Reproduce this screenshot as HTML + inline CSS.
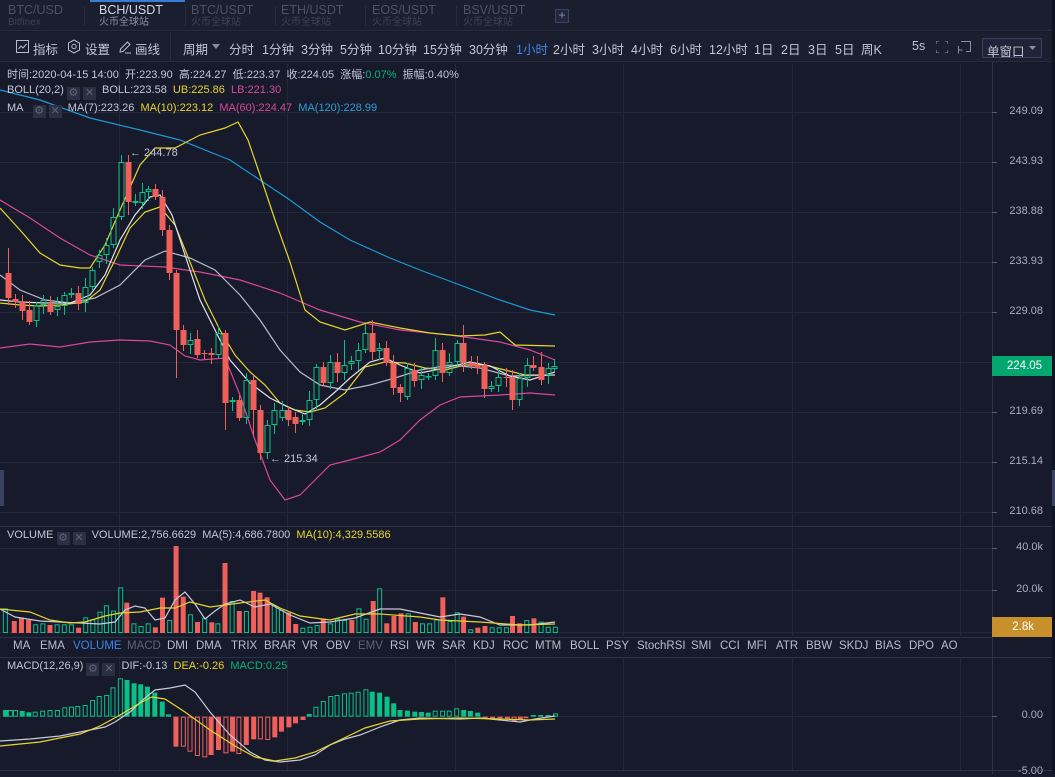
<!DOCTYPE html>
<html><head><meta charset="utf-8">
<style>
*{margin:0;padding:0;box-sizing:border-box}
body{width:1055px;height:774px;overflow:hidden;background:#161a2a;font-family:"Liberation Sans","Noto Sans CJK SC",sans-serif;color:#c3c6d4;position:relative}
.abs{position:absolute;white-space:nowrap}
.tabs{position:absolute;left:0;top:0;width:1052px;height:31px;background:#1a1e2f;border-bottom:1px solid #262b3e}
.tab{position:absolute;top:4px;font-size:12.5px;line-height:13px;color:#4b5168}
.tab small{display:block;font-size:10px;line-height:11px;color:#3d4259}
.tb{position:absolute;top:32px;left:0;width:1052px;height:30px;background:#1a1e2f;border-bottom:1px solid #262b3e;font-size:12.5px}
.tb span{position:absolute;top:7px}
.info{font-size:11px}
.ind span{position:absolute;top:640px;font-size:11.5px;color:#b9bccb}
.ax{position:absolute;left:1003px;font-size:11px;color:#a9adbf;width:40px;text-align:right}
.ibtn{display:inline-block;width:13px;height:13px;background:#2a3042;vertical-align:-3px;margin-right:3px;color:#5d6378;font-size:11px;line-height:13px;text-align:center}
</style></head><body>
<svg id="g" class="abs" style="left:0;top:0" width="1055" height="774"></svg>

<div class="tabs">
 <div style="position:absolute;left:90px;top:0;width:95px;height:2px;background:#3a7bd5"></div>
 <div class="tab" style="left:8px">BTC/USD<small>Bitfinex</small></div>
 <div class="tab" style="left:99px;color:#d4d7e2">BCH/USDT<small style="color:#8a8fa3">火币全球站</small></div>
 <div class="tab" style="left:191px">BTC/USDT<small>火币全球站</small></div>
 <div class="tab" style="left:281px">ETH/USDT<small>火币全球站</small></div>
 <div class="tab" style="left:372px">EOS/USDT<small>火币全球站</small></div>
 <div class="tab" style="left:463px">BSV/USDT<small>火币全球站</small></div>
 <div style="position:absolute;left:84px;top:6px;width:1px;height:20px;background:#262b3e"></div>
 <div style="position:absolute;left:185px;top:6px;width:1px;height:20px;background:#262b3e"></div>
 <div style="position:absolute;left:275px;top:6px;width:1px;height:20px;background:#262b3e"></div>
 <div style="position:absolute;left:365px;top:6px;width:1px;height:20px;background:#262b3e"></div>
 <div style="position:absolute;left:456px;top:6px;width:1px;height:20px;background:#262b3e"></div>
 <div style="position:absolute;left:555px;top:9px;width:14px;height:14px;border:1px solid #3b4260;background:#22283c;color:#8a90aa;font-size:12px;line-height:11px;text-align:center">+</div>
</div>

<div class="tb">
 <svg class="abs" style="left:16px;top:8px" width="13" height="13"><rect x="0.5" y="0.5" width="12" height="12" fill="none" stroke="#b9bccb"/><path d="M2.5 9 L5 6 L7 8 L10.5 4" fill="none" stroke="#b9bccb"/></svg>
 <span style="left:33px">指标</span>
 <svg class="abs" style="left:67px;top:7px" width="14" height="15"><path d="M7 1 L12.5 4 L12.5 11 L7 14 L1.5 11 L1.5 4 Z" fill="none" stroke="#b9bccb"/><circle cx="7" cy="7.5" r="2.2" fill="none" stroke="#b9bccb"/></svg>
 <span style="left:85px">设置</span>
 <svg class="abs" style="left:118px;top:8px" width="14" height="14"><path d="M2 12 L2.5 9 L9.5 2 L12 4.5 L5 11.5 Z M7 13 H13" fill="none" stroke="#b9bccb"/></svg>
 <span style="left:135px">画线</span>
 <div style="position:absolute;left:170px;top:0;width:1px;height:30px;background:#262b3e"></div>
 <span style="left:183px">周期</span>
 <svg class="abs" style="left:212px;top:12px" width="9" height="6"><path d="M0 0 H8 L4 5 Z" fill="#8a8fa3"/></svg>
 <span style="left:229px">分时</span><span style="left:262px">1分钟</span><span style="left:301px">3分钟</span><span style="left:340px">5分钟</span><span style="left:378px">10分钟</span><span style="left:423px">15分钟</span><span style="left:469px">30分钟</span><span style="left:516px;color:#3f86e6">1小时</span><span style="left:553px">2小时</span><span style="left:592px">3小时</span><span style="left:631px">4小时</span><span style="left:670px">6小时</span><span style="left:709px">12小时</span><span style="left:754px">1日</span><span style="left:781px">2日</span><span style="left:808px">3日</span><span style="left:835px">5日</span><span style="left:861px">周K</span>
 <span style="left:912px">5s</span>
 <svg class="abs" style="left:936px;top:9px" width="12" height="12"><path d="M0 3V0H3M9 0H12V3M12 9V12H9M3 12H0V9" fill="none" stroke="#8a8fa3"/></svg>
 <svg class="abs" style="left:958px;top:9px" width="13" height="13"><path d="M3 0.5H12.5V10.5H8M0.5 5V12.5M0.5 9H4.5" fill="none" stroke="#8a8fa3"/></svg>
 <div style="position:absolute;left:982px;top:6px;width:60px;height:20px;border:1px solid #3a4160;background:#1f2438"></div>
 <span style="left:987px;top:9px">单窗口</span>
 <svg class="abs" style="left:1029px;top:14px" width="8" height="5"><path d="M0 0H7L3.5 4Z" fill="#8a8fa3"/></svg>
</div>

<div class="abs info" style="left:7px;top:66px">时间:2020-04-15 14:00&nbsp; 开:223.90&nbsp; 高:224.27&nbsp; 低:223.37&nbsp; 收:224.05&nbsp; 涨幅:<span style="color:#08b27b">0.07%</span>&nbsp; 振幅:0.40%</div>
<div class="abs info" style="left:7px;top:84px">BOLL(20,2)&nbsp;<span class="ibtn">⚙</span><span class="ibtn">✕</span> BOLL:223.58&nbsp; <span style="color:#e8d52c">UB:225.86</span>&nbsp; <span style="color:#d9479a">LB:221.30</span></div>
<div class="abs info" style="left:7px;top:102px">MA&nbsp;&nbsp; <span class="ibtn">⚙</span><span class="ibtn">✕</span> MA(7):223.26&nbsp; <span style="color:#e8d52c">MA(10):223.12</span>&nbsp; <span style="color:#d9479a">MA(60):224.47</span>&nbsp; <span style="color:#2f9fd6">MA(120):228.99</span></div>
<div class="abs info" style="left:7px;top:529px">VOLUME&nbsp;<span class="ibtn">⚙</span><span class="ibtn">✕</span> VOLUME:2,756.6629&nbsp; MA(5):4,686.7800&nbsp; <span style="color:#e8d52c">MA(10):4,329.5586</span></div>
<div class="abs info" style="left:7px;top:660px">MACD(12,26,9)&nbsp;<span class="ibtn">⚙</span><span class="ibtn">✕</span> DIF:-0.13&nbsp; <span style="color:#e8d52c">DEA:-0.26</span>&nbsp; <span style="color:#08b27b">MACD:0.25</span></div>

<div class="ind">
<span style="left:13px">MA</span><span style="left:40px">EMA</span><span style="left:73px;color:#3f86e6">VOLUME</span><span style="left:127px;color:#5d6378">MACD</span><span style="left:167px">DMI</span><span style="left:196px">DMA</span><span style="left:231px">TRIX</span><span style="left:264px">BRAR</span><span style="left:302px">VR</span><span style="left:326px">OBV</span><span style="left:358px;color:#5d6378">EMV</span><span style="left:390px">RSI</span><span style="left:416px">WR</span><span style="left:442px">SAR</span><span style="left:473px">KDJ</span><span style="left:503px">ROC</span><span style="left:535px">MTM</span><span style="left:570px">BOLL</span><span style="left:606px">PSY</span><span style="left:637px">StochRSI</span><span style="left:691px">SMI</span><span style="left:720px">CCI</span><span style="left:747px">MFI</span><span style="left:776px">ATR</span><span style="left:806px">BBW</span><span style="left:839px">SKDJ</span><span style="left:875px">BIAS</span><span style="left:909px">DPO</span><span style="left:941px">AO</span>
</div>

<div class="ax" style="top:105px">249.09</div>
<div class="ax" style="top:155px">243.93</div>
<div class="ax" style="top:205px">238.88</div>
<div class="ax" style="top:255px">233.93</div>
<div class="ax" style="top:305px">229.08</div>
<div class="ax" style="top:405px">219.69</div>
<div class="ax" style="top:455px">215.14</div>
<div class="ax" style="top:505px">210.68</div>
<div class="ax" style="top:541px">40.0k</div>
<div class="ax" style="top:583px">20.0k</div>
<div class="ax" style="top:709px">0.00</div>
<div class="ax" style="top:765px">-5.00</div>
<div class="abs" style="left:992px;top:356px;width:60px;height:20px;background:#03a66d;color:#fff;font-size:11.5px;line-height:20px;text-align:right;padding-right:10px">224.05</div>
<div class="abs" style="left:992px;top:617px;width:60px;height:20px;background:#c8902b;color:#fff;font-size:11.5px;line-height:20px;text-align:right;padding-right:18px">2.8k</div>
<div class="abs" style="left:130px;top:147px;font-size:11px;color:#c3c6d4">← 244.78</div>
<div class="abs" style="left:270px;top:453px;font-size:11px;color:#c3c6d4">← 215.34</div>

<script>
var S='';
function L(x1,y1,x2,y2,c,w){S+='<line x1="'+x1+'" y1="'+y1+'" x2="'+x2+'" y2="'+y2+'" stroke="'+c+'" stroke-width="'+(w||1)+'"/>';}
function R(x,y,w,h,c,hollow){if(h<1)h=1;if(hollow)S+='<rect x="'+(x+0.5)+'" y="'+(y+0.5)+'" width="'+(w-1)+'" height="'+Math.max(h-1,0.5)+'" fill="none" stroke="'+c+'"/>';else S+='<rect x="'+x+'" y="'+y+'" width="'+w+'" height="'+h+'" fill="'+c+'"/>';}
function P(pts,c){S+='<polyline points="'+pts.map(p=>p.join(',')).join(' ')+'" fill="none" stroke="'+c+'" stroke-width="1.2"/>';}
var G='#0bc087',RD='#f0605a',GR='#232839';
S+='<rect x="1052" y="0" width="3" height="774" fill="#0f1220"/>';
[112,162,212,262,312,362,412,462,512,548,590,632,716].forEach(y=>L(0,y+0.5,992,y+0.5,GR));
[119,287,455,623,792,960].forEach(x=>{L(x+0.5,64,x+0.5,526,GR);L(x+0.5,527,x+0.5,636,GR);L(x+0.5,658,x+0.5,770,GR);});
L(992.5,62,992.5,774,'#2b3148');
L(0,526.5,1052,526.5,'#2b3148');L(0,637.5,992,637.5,'#2b3148');L(0,657.5,1052,657.5,'#2b3148');L(0,770.5,1052,770.5,'#2b3148');
[112,162,212,262,312,412,462,512,548,590,716].forEach(y=>L(992,y+0.5,997,y+0.5,'#555b72'));
S+='<rect x="0" y="470" width="4" height="36" fill="#3a4160"/><rect x="1052" y="470" width="3" height="36" fill="#3a4160"/>';
P([[0,90],[40,100],[90,118],[140,130],[180,140],[230,160],[260,180],[290,200],[320,222],[350,240],[390,258],[420,270],[460,285],[500,300],[530,310],[555,315]],'#1b9ad6');
P([[0,200],[30,218],[60,238],[90,255],[120,265],[165,267],[200,272],[240,280],[280,293],[320,310],[360,322],[400,330],[450,335],[500,342],[530,350],[555,360]],'#d9479a');
P([[0,348],[30,344],[60,347],[90,342],[120,340],[150,341],[170,345],[185,356],[200,360],[225,358],[240,395],[255,440],[270,480],[285,500],[300,495],[315,480],[330,465],[350,460],[380,452],[400,440],[420,420],[440,405],[460,397],[500,395],[530,393],[555,395]],'#d9479a');
P([[0,208],[20,230],[40,253],[60,265],[80,268],[90,268],[105,245],[120,210],[140,165],[155,148],[175,148],[200,135],[225,128],[238,122],[248,140],[260,175],[275,220],[290,262],[305,310],[320,322],[345,330],[370,322],[400,328],[430,333],[460,336],[485,335],[500,332],[515,345],[555,346]],'#e8d52c');
P([[0,303],[20,305],[40,306],[60,305],[85,302],[100,290],[115,260],[130,228],[145,212],[160,207],[175,225],[190,262],[205,300],[220,330],[235,355],[250,372],[265,385],[280,403],[295,410],[310,412],[325,408],[345,393],[365,367],[385,362],[405,363],[425,368],[445,370],[465,365],[485,365],[505,370],[525,375],[555,375]],'#e8d52c');
P([[0,275],[20,290],[45,300],[70,303],[95,298],[120,285],[145,260],[165,251],[190,258],[215,270],[240,295],[260,320],[280,350],[300,372],[320,385],[345,390],[370,385],[395,378],[420,370],[450,365],[480,368],[510,376],[555,375]],'#b8bccd');
P([[0,300],[20,302],[45,303],[70,303],[90,295],[105,275],[120,240],[135,215],[150,197],[160,195],[172,215],[185,255],[200,300],[215,330],[230,360],[250,383],[270,398],[290,408],[305,414],[320,405],[335,392],[350,378],[370,362],[385,358],[400,365],[420,373],[445,368],[470,362],[490,366],[510,376],[530,380],[555,372]],'#e0e2ea');
var C=[[8,273,298],[15,299,302],[22,302,311],[29,310,322],[36,321,305],[43,305,300],[50,303,312],[57,310,306],[64,306,295],[71,295,293],[78,293,304],[85,303,287],[92,287,270],[99,262,255],[106,255,245],[113,245,217],[121,217,162],[128,162,202],[135,203,201],[142,203,192],[148,192,189],[155,189,197],[162,197,230],[169,230,273],[176,273,330],[183,330,345],[190,345,340],[197,339,355],[204,353,354],[211,353,355],[218,355,333],[225,333,403],[232,402,400],[239,400,418],[246,418,380],[253,380,410],[260,410,453],[267,453,425],[274,425,410],[282,418,410],[288,410,420],[295,417,424],[302,422,420],[309,420,400],[316,400,367],[323,367,383],[330,383,362],[337,362,373],[344,373,365],[351,364,361],[358,361,350],[365,350,333],[372,333,352],[379,351,348],[386,348,363],[393,363,388],[400,387,393],[407,397,368],[414,370,381],[421,380,375],[428,377,376],[435,376,350],[442,350,373],[449,373,362],[457,362,343],[463,343,363],[471,363,366],[477,365,368],[484,365,389],[491,389,386],[498,386,377],[506,377,378],[512,377,400],[519,400,378],[527,378,365],[533,365,368],[541,367,380],[548,375,368],[554,369,366]];
var wk={8:[248,305],121:[155,220],128:[155,215],176:[270,378],169:[225,280],260:[405,460],225:[330,430],253:[375,435],372:[320,360],463:[325,372],512:[370,410],393:[355,395],344:[340,380],435:[338,380],541:[352,385]};
C.forEach((d,i)=>{var x=d[0],o=d[1],c=d[2],up=c<o,col=up?G:RD,t=Math.min(o,c),b=Math.max(o,c);
 var w=wk[x]||[t-3-(i%4)*2,b+3+(i%3)*3];
 L(x+0.5,w[0],x+0.5,t,col);L(x+0.5,b,x+0.5,w[1],col);
 R(x-2.5,t,6,b-t,col,up);});
var V=[[15,265,'g'],[40,303,'r'],[60,293,'r'],[80,300,'r'],[100,313,'g'],[120,310,'g'],[140,315,'r'],[160,313,'g'],[180,313,'g'],[200,313,'g'],[220,323,'r'],[240,292,'g'],[260,298,'g'],[280,275,'g'],[298,256,'g'],[318,272,'g'],[338,202,'g'],[355,248,'r'],[375,310,'g'],[395,318,'g'],[415,310,'g'],[435,322,'r'],[455,233,'r'],[475,300,'g'],[493,78,'r'],[513,230,'r'],[533,283,'g'],[553,306,'r'],[573,293,'g'],[593,307,'r'],[610,310,'g'],[630,129,'r'],[650,243,'g'],[670,273,'r'],[690,273,'g'],[710,213,'r'],[728,218,'r'],[748,232,'r'],[768,256,'g'],[788,270,'g'],[808,278,'r'],[828,312,'r'],[848,323,'g'],[868,320,'g'],[888,315,'g'],[905,296,'r'],[925,310,'g'],[945,296,'g'],[965,300,'g'],[985,300,'r'],[1005,265,'g'],[1025,296,'g'],[1045,243,'r'],[1063,205,'g'],[1083,310,'r'],[1103,288,'r'],[1123,280,'r'],[1143,280,'g'],[1163,306,'r'],[1183,310,'g'],[1203,310,'g'],[1223,298,'g'],[1240,232,'r'],[1260,303,'g'],[1280,277,'g'],[1298,290,'r'],[1318,328,'g'],[1338,323,'r'],[1358,318,'r'],[1378,322,'g'],[1398,322,'g'],[1418,322,'g'],[1435,288,'r'],[1455,310,'r'],[1475,300,'g'],[1495,295,'r'],[1515,305,'g'],[1535,320,'g'],[1555,320,'g']];
V.forEach(v=>{var x=v[0]/2.8,t=520+v[1]/3;R(x-2.5,t,5,633-t,v[2]=='g'?G:RD,v[2]=='g');});
P([[0,609],[15,617],[40,621],[60,622],[80,623],[100,624],[115,622],[125,610],[135,606],[145,608],[155,620],[165,618],[175,600],[185,592],[195,604],[205,619],[215,611],[225,604],[240,600],[255,607],[270,604],[290,615],[310,623],[330,622],[355,618],[380,609],[400,609],[420,613],[440,617],[460,614],[480,617],[500,625],[530,625],[555,622]],'#c8cbda');
P([[0,609],[30,612],[50,620],[70,623],[85,622],[105,616],[120,613],[140,612],[160,608],[175,608],[190,602],[210,607],[240,603],[265,600],[280,608],[300,616],[330,620],[355,614],[380,614],[420,617],[440,620],[480,622],[520,625],[555,624]],'#e8d52c');
var M=[[15,180],[28,180],[42,180],[60,183],[78,187],[95,185],[115,182],[135,180],[155,180],[175,172],[193,170],[210,168],[230,165],[250,150],[268,138],[288,135],[305,112],[325,85],[343,90],[362,100],[380,103],[398,110],[418,128],[438,155],[455,193],[475,290],[495,290],[513,305],[533,318],[553,322],[570,315],[590,300],[610,310],[628,305],[645,312],[665,285],[685,268],[703,268],[723,270],[742,262],[760,245],[780,232],[798,220],[818,210],[835,192],[853,170],[873,153],[893,138],[910,135],[930,130],[948,128],[967,125],[988,118],[1005,125],[1025,128],[1045,140],[1063,160],[1080,180],[1100,182],[1120,185],[1138,186],[1156,188],[1175,182],[1195,182],[1213,182],[1233,175],[1252,180],[1270,183],[1290,188],[1310,205],[1330,206],[1350,205],[1370,206],[1388,213],[1405,208],[1420,204],[1440,195],[1460,195],[1480,195],[1500,190]];
var Z=200,prev=null;
M.forEach(m=>{var x=m[0]/2.7,v=Z-m[1],pos=v>0,mag=Math.abs(v);
 var rising=prev!==null&&mag>=Math.abs(prev)&&(prev>0)==pos;
 var y=650+Math.min(Z,m[1])/3,h=Math.abs(v)/3;
 R(x-2.5,y,5,Math.max(h,1.5),pos?G:RD,rising);prev=v;});
P([[0,741],[30,739],[60,736],[75,733],[90,730],[105,727],[115,722],[130,712],[145,698],[155,690],[170,688],[185,685],[195,692],[210,712],[230,735],[250,752],[265,760],[280,762],[300,760],[315,755],[330,745],[345,739],[360,735],[380,727],[400,720],[420,718],[460,719],[480,718],[500,720],[520,722],[535,719],[555,716]],'#c8cbda');
P([[0,746],[40,742],[80,734],[100,726],[120,715],[140,703],[152,697],[165,699],[185,712],[210,730],[235,746],[255,757],[275,761],[295,758],[315,752],[340,740],[365,728],[390,721],[420,719],[460,718],[500,719],[530,720],[555,719]],'#e8d52c');
L(996,366.5,1000,366.5,'#fff');L(996,627.5,1000,627.5,'#fff');
document.getElementById('g').innerHTML=S;
</script>
</body></html>
